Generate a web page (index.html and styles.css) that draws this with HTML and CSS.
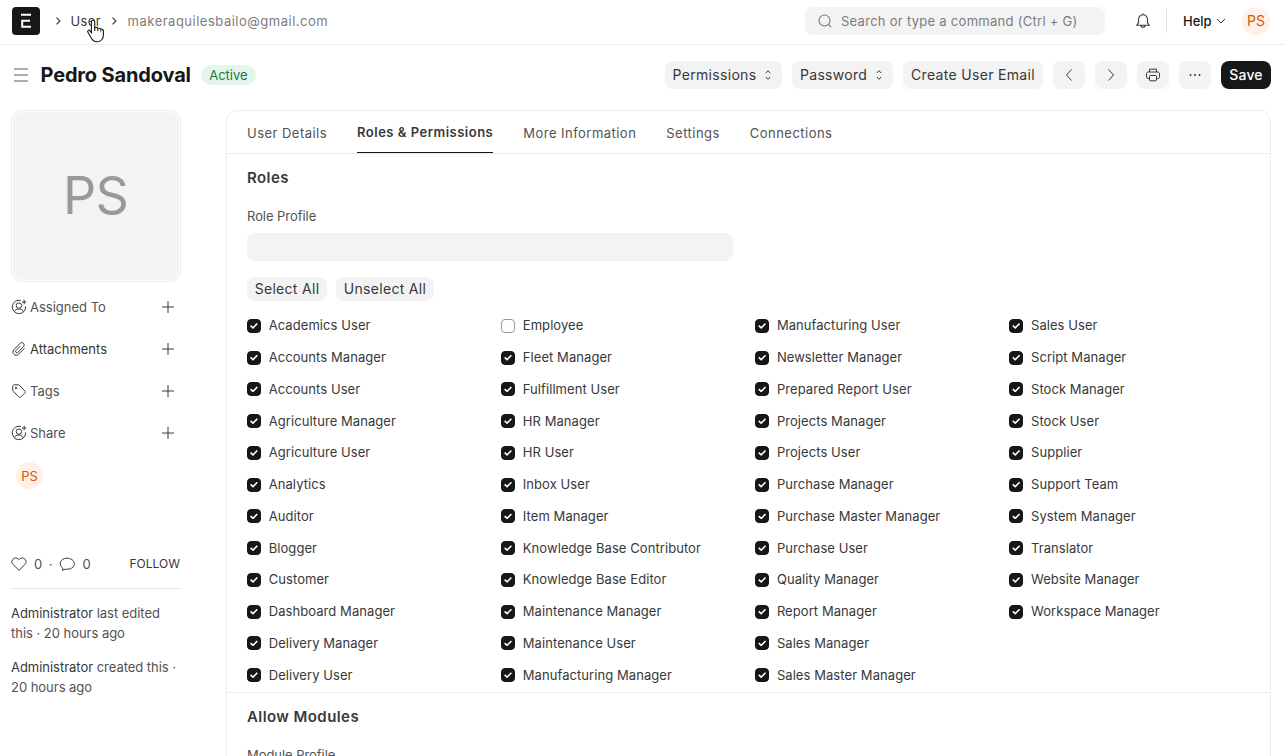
FILE: index.html
```html
<!DOCTYPE html>
<html lang="en">
<head>
<meta charset="utf-8">
<title>Pedro Sandoval</title>
<link rel="stylesheet" href="styles.css">
</head>
<body>
<svg class="sprite" width="0" height="0">
  <symbol id="i-plus" viewBox="0 0 16 16"><path d="M8 2v12M2 8h12"/></symbol>
  <symbol id="i-right" viewBox="0 0 16 16"><path d="M6 3.500 10.500 8 6 12.500"/></symbol>
  <symbol id="i-assign" viewBox="0 0 16 16"><path d="M9.800 1.500A6.700 6.700 0 1 0 14.600 7.300M3.400 12.800c.5-1.800 2.200-2.800 4.500-2.800s4 1 4.500 2.800M13.200.8v4.400M11 3h4.400"/><circle cx="7.900" cy="6.600" r="2.700"/></symbol>
  <symbol id="i-updown" viewBox="0 0 8 12"><path d="M1.800 4 4 1.700 6.200 4M1.800 8 4 10.300 6.200 8"/></symbol>
</svg>

<header class="navbar">
  <div class="logo"><svg width="28" height="28" viewBox="0 0 28 28"><path d="M9 7.700h10M10.200 13.700h7.800M10.200 12.700v7.300M9.200 19.800H19" stroke="#fff" stroke-width="2" fill="none"/></svg></div>
  <svg class="crumb-sep" width="12" height="12"><use href="#i-right"/></svg>
  <a class="crumb">User</a>
  <svg class="crumb-sep second" width="12" height="12"><use href="#i-right"/></svg>
  <span class="crumb-current">makeraquilesbailo@gmail.com</span>
  <div class="search">
    <svg width="14" height="14" viewBox="0 0 14 14"><circle cx="6.500" cy="6.500" r="5.500"/><path d="m10.500 10.500 2.500 2.500"/></svg>
    <span>Search or type a command (Ctrl + G)</span>
  </div>
  <svg class="bell" width="16" height="18" viewBox="0 0 16 18"><path d="M8 1.500v1.200M8 2.700a4.500 4.500 0 0 0-4.500 4.500v3.300L1.800 13.300h12.400l-1.700-2.800V7.200A4.500 4.500 0 0 0 8 2.700ZM6 13.300a2 2 0 0 0 4 0"/></svg>
  <div class="divider"></div>
  <div class="help">Help<svg width="10" height="10" viewBox="0 0 10 10"><path d="m1 3 4 4 4-4"/></svg></div>
  <div class="avatar nav-avatar">PS</div>
</header>
<svg class="pointer" width="20" height="24" viewBox="0 0 20 24"><path d="M7 1.300c1 0 1.700.7 1.700 1.700v6c0-1 3-1 3.100.7 0-.8 2.800-.7 2.900.8 0-.8 2.700-.5 2.700 1.200v4.300c0 3-1.900 6.700-5.900 6.700-3.500 0-5.300-1.700-6.500-4.300L2 13.500c-1.200-2 1-3 2-1.700l1.400 1.900V3c0-1 .7-1.700 1.600-1.700Z"/><path d="M8.700 9v3M11.800 9.800V12M14.700 10.800v1.700"/></svg>

<div class="page-head">
  <svg class="menu" width="14" height="14" viewBox="0 0 14 14"><path d="M0 1h14M0 7h14M0 13h14"/></svg>
  <h1>Pedro Sandoval</h1>
  <span class="status">Active</span>
  <div class="actions">
    <button class="btn w-perm">Permissions<svg width="8" height="12"><use href="#i-updown"/></svg></button>
    <button class="btn w-pass">Password<svg width="8" height="12"><use href="#i-updown"/></svg></button>
    <button class="btn w-mail">Create User Email</button>
    <button class="btn icon"><svg width="16" height="16" viewBox="0 0 16 16"><path d="M10.500 2.500 5.500 8l5 5.500"/></svg></button>
    <button class="btn icon"><svg width="16" height="16" viewBox="0 0 16 16"><path d="m5.500 2.500 5 5.500-5 5.500"/></svg></button>
    <button class="btn icon"><svg width="16" height="16" viewBox="0 0 16 16"><path d="M4.500 5V2.200h7V5M4.500 11.500H3.200A1.700 1.700 0 0 1 1.500 9.800V6.700C1.500 5.700 2.200 5 3.200 5h9.600c1 0 1.700.7 1.700 1.700v3.100c0 1-.7 1.700-1.700 1.700h-1.300"/><rect x="4.500" y="8.500" width="7" height="5.300" rx=".8"/></svg></button>
    <button class="btn icon"><svg class="dots" width="16" height="16" viewBox="0 0 16 16"><circle cx="3.500" cy="8" r="1"/><circle cx="8" cy="8" r="1"/><circle cx="12.500" cy="8" r="1"/></svg></button>
    <button class="btn primary">Save</button>
  </div>
</div>

<div class="layout">
  <aside class="sidebar">
    <div class="photo">PS</div>
    <ul class="side-list">
      <li><svg width="16" height="16"><use href="#i-assign"/></svg><span>Assigned To</span><svg class="add" width="16" height="16"><use href="#i-plus"/></svg></li>
      <li class="dark"><svg width="16" height="16" viewBox="0 0 16 16"><path d="m13.500 7.200-5.700 5.900c-3.300 3.300-8-.9-4.900-4.400l6-6.200c2.400-2.300 5.700.6 3.600 3.100l-5.600 5.800c-1.300 1.200-3.100-.3-2-1.700l4.300-4.400"/></svg><span>Attachments</span><svg class="add" width="16" height="16"><use href="#i-plus"/></svg></li>
      <li><svg width="16" height="16" viewBox="0 0 16 16"><path d="M1.700 3.500v3.700c0 .4.200.8.500 1.100l5.600 5.600c.6.600 1.500.6 2.100 0l4-4c.6-.6.600-1.500 0-2.100L8.300 2.300A1.600 1.600 0 0 0 7.200 1.800H3.300c-.9 0-1.600.8-1.600 1.700Z"/><circle cx="5" cy="5" r=".8"/></svg><span>Tags</span><svg class="add" width="16" height="16"><use href="#i-plus"/></svg></li>
      <li><svg width="16" height="16"><use href="#i-assign"/></svg><span>Share</span><svg class="add" width="16" height="16"><use href="#i-plus"/></svg></li>
    </ul>
    <div class="avatar share-avatar">PS</div>
    <div class="stats">
      <svg width="16" height="16" viewBox="0 0 16 16"><path d="M8 14.300 1.800 8.200C-1.300 4.500 4.500-.9 8 3.700c3.500-4.600 9.300.8 6.200 4.500Z"/></svg>
      <span class="n1">0</span><span class="dot">·</span>
      <svg width="16" height="16" viewBox="0 0 16 16"><path d="M3.800 12.200C-.8 9 1 2.200 8 2.200c4 0 7.300 2.300 7.300 5.500 0 3.900-4.100 6-8.300 5.400l-3.600 1.200Z"/></svg>
      <span class="n2">0</span><span class="follow">FOLLOW</span>
    </div>
    <p class="log"><b>Administrator</b> last edited<br>this · 20 hours ago</p>
    <p class="log"><b>Administrator</b> created this ·<br>20 hours ago</p>
  </aside>

  <main class="card">
    <nav class="tabs">
      <a>User Details</a><a class="active">Roles &amp; Permissions</a><a>More Information</a><a>Settings</a><a>Connections</a>
    </nav>
    <section class="roles">
      <h2>Roles</h2>
      <label class="field-label">Role Profile</label>
      <div class="input"></div>
      <div class="bulk"><button class="btn small">Select All</button><button class="btn small second">Unselect All</button></div>
      <div class="checks">
        <label><i class="on"></i>Academics User</label>
        <label><i class="on"></i>Accounts Manager</label>
        <label><i class="on"></i>Accounts User</label>
        <label><i class="on"></i>Agriculture Manager</label>
        <label><i class="on"></i>Agriculture User</label>
        <label><i class="on"></i>Analytics</label>
        <label><i class="on"></i>Auditor</label>
        <label><i class="on"></i>Blogger</label>
        <label><i class="on"></i>Customer</label>
        <label><i class="on"></i>Dashboard Manager</label>
        <label><i class="on"></i>Delivery Manager</label>
        <label><i class="on"></i>Delivery User</label>
        <label><i></i>Employee</label>
        <label><i class="on"></i>Fleet Manager</label>
        <label><i class="on"></i>Fulfillment User</label>
        <label><i class="on"></i>HR Manager</label>
        <label><i class="on"></i>HR User</label>
        <label><i class="on"></i>Inbox User</label>
        <label><i class="on"></i>Item Manager</label>
        <label><i class="on"></i>Knowledge Base Contributor</label>
        <label><i class="on"></i>Knowledge Base Editor</label>
        <label><i class="on"></i>Maintenance Manager</label>
        <label><i class="on"></i>Maintenance User</label>
        <label><i class="on"></i>Manufacturing Manager</label>
        <label><i class="on"></i>Manufacturing User</label>
        <label><i class="on"></i>Newsletter Manager</label>
        <label><i class="on"></i>Prepared Report User</label>
        <label><i class="on"></i>Projects Manager</label>
        <label><i class="on"></i>Projects User</label>
        <label><i class="on"></i>Purchase Manager</label>
        <label><i class="on"></i>Purchase Master Manager</label>
        <label><i class="on"></i>Purchase User</label>
        <label><i class="on"></i>Quality Manager</label>
        <label><i class="on"></i>Report Manager</label>
        <label><i class="on"></i>Sales Manager</label>
        <label><i class="on"></i>Sales Master Manager</label>
        <label><i class="on"></i>Sales User</label>
        <label><i class="on"></i>Script Manager</label>
        <label><i class="on"></i>Stock Manager</label>
        <label><i class="on"></i>Stock User</label>
        <label><i class="on"></i>Supplier</label>
        <label><i class="on"></i>Support Team</label>
        <label><i class="on"></i>System Manager</label>
        <label><i class="on"></i>Translator</label>
        <label><i class="on"></i>Website Manager</label>
        <label><i class="on"></i>Workspace Manager</label>
      </div>
    </section>
    <section class="modules">
      <h2>Allow Modules</h2>
      <label class="field-label">Module Profile</label>
    </section>
  </main>
</div>
</body>
</html>
```
FILE: styles.css
```css
* { box-sizing: border-box; }
html, body { height: 756px; overflow: hidden; }
body { margin: 0; background: #fff; color: #383838; font: 13px/20px Inter, sans-serif; letter-spacing: 0; display: flex; flex-direction: column; }
svg { fill: none; stroke: #383838; stroke-width: 1; flex: none; display: block; }
.sprite { position: absolute; }
h1, h2, p, ul { margin: 0; padding: 0; }

.navbar { height: 45px; flex: none; border-bottom: 1px solid #ededed; display: flex; align-items: center; padding: 0 15px 2px 12px; }
.logo { width: 28px; height: 28px; border-radius: 4px; background: #171717; }
.crumb-sep { margin-left: 12px; stroke-width: 1.6; }
.crumb { margin-left: 6.5px; color: #383838; letter-spacing: 0.4px; }
.crumb-sep.second { margin-left: 6.5px; }
.crumb-current { margin-left: 8px; color: #7c7c7c; letter-spacing: 0.5px; }
.search { margin-left: auto; width: 300px; height: 28px; border-radius: 8px; background: #f3f3f3; display: flex; align-items: center; gap: 9px; padding-left: 13px; color: #7c7c7c; }
.search svg { stroke: #7c7c7c; stroke-width: 1.1; }
.search span { letter-spacing: 0.28px; }
.bell { margin-left: 30px; stroke-width: 1.1; }
.divider { width: 1px; height: 24px; background: #e2e2e2; margin-left: 15px; }
.help { width: 43px; margin-left: 16px; display: flex; align-items: center; justify-content: space-between; color: #171717; font-weight: 500; }
.avatar { width: 28px; height: 28px; border-radius: 50%; background: #fff1e7; color: #d45a08; display: flex; align-items: center; justify-content: center; }
.nav-avatar { margin-left: 16px; font-size: 14px; }
.pointer { position: absolute; left: 86px; top: 19px; fill: #fff; stroke: #171717; stroke-width: 1.1; }

.page-head { height: 60px; flex: none; display: flex; align-items: center; padding: 0 14px; }
.menu { stroke: #5c5c5c; }
h1 { margin-left: 12.5px; font-size: 20px; line-height: 28px; font-weight: 700; color: #171717; letter-spacing: -0.15px; }
.status { margin-left: 10px; height: 20px; width: 55px; text-align: center; border-radius: 10px; background: #e4f5e9; color: #16794c; line-height: 20px; letter-spacing: -0.05px; }
.actions { margin-left: auto; display: flex; gap: 10px; }
.btn { height: 28px; border: 0; border-radius: 8px; background: #f3f3f3; color: #383838; font: 14px/20px Inter, sans-serif; letter-spacing: 0.3px; padding: 0; display: flex; align-items: center; justify-content: center; white-space: nowrap; }
.w-perm, .w-pass { justify-content: space-between; padding: 0 10px 0 7.5px; }
.w-perm { width: 117px; letter-spacing: 0.32px; }
.w-pass { width: 101px; padding-left: 8px; }
.w-mail { width: 140px; letter-spacing: 0.32px; }
.icon { width: 32px; }
.dots { fill: #383838; stroke: none; }
.primary { width: 50px; background: #171717; color: #fff; font-weight: 500; letter-spacing: 0.2px; }

.layout { flex: 1; min-height: 0; display: flex; padding: 5px 14px 0 11px; gap: 45px; }
.sidebar { width: 170px; flex: none; }
.photo { height: 172px; border: 1px solid #ededed; box-shadow: inset 0 0 0 1px #fff; background: #f3f3f3; border-radius: 11px; display: flex; align-items: center; justify-content: center; padding-right: 1px; color: #999; font-size: 52px; letter-spacing: -0.8px; line-height: 60px; }
.side-list { list-style: none; padding-top: 15px; display: flex; flex-direction: column; gap: 22px; }
.side-list li { height: 20px; display: flex; align-items: center; gap: 3px; color: #525252; }
.side-list .dark { color: #383838; }
.side-list .add { margin-left: auto; margin-right: 5px; }
.share-avatar { width: 27px; height: 27px; margin: 19px 0 0 5px; }
.stats { display: flex; align-items: center; height: 20px; margin-top: 65px; color: #525252; }
.stats .n1 { margin-left: 7px; }
.stats .dot { margin: 0 6.5px; }
.stats .n2 { margin-left: 7.5px; }
.follow { margin-left: auto; margin-right: 1px; color: #383838; font-size: 12px; }
.stats + .log { margin-top: 14px; border-top: 1px solid #e2e2e2; padding-top: 14px; }
.log { color: #525252; margin-top: 14px; white-space: nowrap; letter-spacing: -0.03px; }
.log b { font-weight: 400; color: #383838; }

.card { flex: 1; min-width: 0; height: 660px; border: 1px solid #ededed; border-radius: 11px; }
.tabs { height: 43px; border-bottom: 1px solid #ededed; display: flex; gap: 30px; padding-left: 20px; color: #525252; letter-spacing: 0.47px; }
.tabs a { padding-top: 12px; height: 42px; }
.tabs .active { padding-top: 11px; color: #383838; font-weight: 600; border-bottom: 1px solid #171717; letter-spacing: 0.5px; }
.roles { height: 539px; padding: 13px 20px 0; border-bottom: 1px solid #ededed; }
h2 { font-size: 15px; line-height: 21px; font-weight: 600; color: #383838; letter-spacing: 0.42px; }
.field-label { display: block; margin-top: 18px; color: #525252; line-height: 20px; letter-spacing: -0.05px; }
.input { width: 486px; height: 28px; margin-top: 7px; border-radius: 8px; background: #f3f3f3; }
.bulk { display: flex; gap: 9px; margin-top: 16px; }
.small { width: 80px; height: 24px; }
.small.second { width: 98px; }
.checks { display: grid; grid-template-rows: repeat(12, 31.75px); grid-auto-flow: column; grid-auto-columns: 254.1px; margin-top: 8.6px; letter-spacing: 0.07px; }
.checks label { display: flex; align-items: center; gap: 7.7px; white-space: nowrap; }
.checks i { width: 14px; height: 14px; margin-top: 1px; flex: none; border: 1px solid #999; border-radius: 4px; display: flex; align-items: center; justify-content: center; }
.checks .on { background: #171717; border-color: #171717; }
.checks .on::after { content: ""; width: 8px; height: 6px; background: #fff; clip-path: polygon(0 3.2px, 1.1px 2.1px, 3px 3.9px, 6.7px 0, 7.9px 1.1px, 3px 6px); }
.modules { padding: 13px 20px 0; }
```
